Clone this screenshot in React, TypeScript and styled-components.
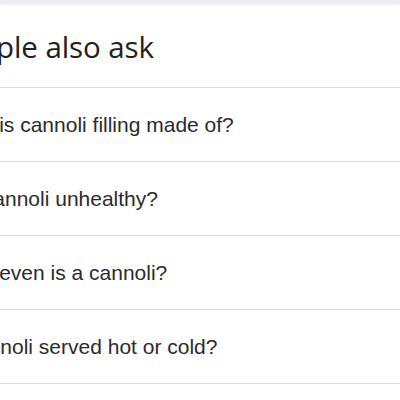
import React from "react";
import styled, { createGlobalStyle } from "styled-components";

const questions = [
    "What is cannoli filling made of?",
    "Are cannoli unhealthy?",
    "What even is a cannoli?",
    "Is cannoli served hot or cold?",
];

const App: React.FunctionComponent = () => {
    return (
        <>
            <GlobalStyle />
            <Page>
                <TopBand />
                <Panel>
                    <Heading>People also ask</Heading>
                    <List>
                        {questions.map(q => (
                            <Question key={q}>
                                <QuestionText>{q}</QuestionText>
                            </Question>
                        ))}
                    </List>
                </Panel>
            </Page>
        </>
    );
};

const GlobalStyle = createGlobalStyle`
    html, body {
        margin: 0;
        padding: 0;
        background: #ffffff;
    }
    body {
        width: 400px;
        height: 400px;
        overflow: hidden;
    }
`;

const Page = styled.div`
    width: 400px;
    height: 400px;
    overflow: hidden;
    display: flex;
    flex-direction: column;
    background: #ffffff;
`;

const TopBand = styled.div`
    height: 4px;
    flex-shrink: 0;
    background: #eceef1;
    box-shadow: 0 1px 3px rgba(60, 64, 67, 0.08);
`;

/* the screenshot is cropped: the card starts left of the window */
const Panel = styled.div`
    margin-left: -55.7px;
    display: flex;
    flex-direction: column;
`;

const Heading = styled.h2`
    margin: 0;
    height: 84px;
    display: flex;
    align-items: center;
    padding-top: 2px;
    box-sizing: border-box;
    font-family: "Open Sans", "Noto Sans", sans-serif;
    font-weight: 400;
    font-size: 29.5px;
    letter-spacing: -0.1px;
    color: #202124;
    border-bottom: 1.5px solid #dadce0;
`;

const List = styled.div`
    display: flex;
    flex-direction: column;
`;

const Question = styled.div`
    height: 74px;
    box-sizing: border-box;
    display: flex;
    align-items: center;
    border-bottom: 1.5px solid #dadce0;
`;

const QuestionText = styled.span`
    font-family: "Liberation Sans", Arial, sans-serif;
    font-size: 21px;
    color: #2b2b2b;
    white-space: nowrap;
`;

export default App;
